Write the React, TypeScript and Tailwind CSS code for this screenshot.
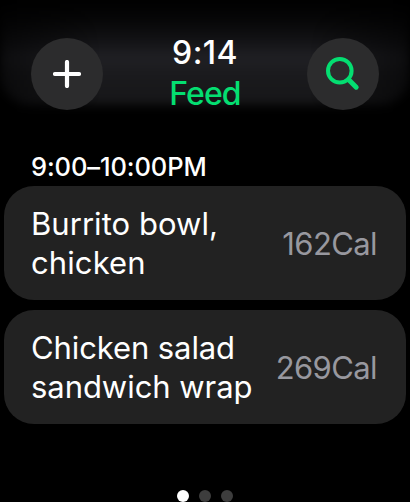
type Entry = {
  name: [string, string];
  tracking: [string, string];
  cal: string;
};

const entries: Entry[] = [
  {
    name: ['Burrito bowl,', 'chicken'],
    tracking: ['tracking-[0.05px]', 'tracking-[0.1px]'],
    cal: '162Cal',
  },
  {
    name: ['Chicken salad', 'sandwich wrap'],
    tracking: ['tracking-[-0.1px]', 'tracking-[-0.05px]'],
    cal: '269Cal',
  },
];

function EntryCard({ entry }: { entry: Entry }) {
  return (
    <li className="flex h-[114px] items-center justify-between rounded-[30px] bg-[#222222] pr-[29px] pl-[27px]">
      <div className="text-[31px] leading-[39px] whitespace-nowrap text-white">
        <div className={entry.tracking[0]}>{entry.name[0]}</div>
        <div className={entry.tracking[1]}>{entry.name[1]}</div>
      </div>
      <span className="text-[31px] leading-[39px] tracking-[-0.6px] text-[#98989f]">{entry.cal}</span>
    </li>
  );
}

export default function App() {
  return (
    <div className="flex h-[502px] w-[410px] flex-col overflow-hidden bg-black font-['Inter',sans-serif]">
      <header className="relative flex h-[118px] shrink-0 justify-between px-[31px] pt-[38px]">
        {/* Soft glow under the status bar */}
        <div className="absolute inset-0 [mask-image:linear-gradient(to_right,rgba(0,0,0,0.4)_0%,#000_25%,#000_75%,rgba(0,0,0,0.4)_100%)]">
          <div className="h-[105px] rounded-b-[30px] bg-[linear-gradient(to_bottom,#000_0px,#060607_20px,#111113_38px,#202024_58px,#1a1a1d_74px,#161618_105px)] blur-[5px]" />
        </div>

        <button aria-label="Add" className="relative flex size-[72px] items-center justify-center rounded-full bg-[#2c2c2d]">
          <svg width="28" height="28" viewBox="0 0 28 28" stroke="#fff" strokeWidth="4.2" strokeLinecap="round">
            <path d="M14 2v24M2 14h24" />
          </svg>
        </button>

        <div className="relative -mt-[6px] flex flex-col items-center text-[32px] leading-[41px] font-medium">
          <span className="tracking-[0.4px] text-white">9:14</span>
          <span className="tracking-[-0.9px] text-[#04de71]">Feed</span>
        </div>

        <button aria-label="Search" className="relative flex size-[72px] items-center justify-center rounded-full bg-[#2c2c2d]">
          <svg width="36" height="36" viewBox="0 0 36 36" fill="none" stroke="#04de71" strokeLinecap="round">
            <circle cx="14.8" cy="14.8" r="11.8" strokeWidth="4" />
            <path d="M23.5 23.5l7.7 7.7" strokeWidth="5" />
          </svg>
        </button>
      </header>

      <main className="px-1 pt-[34px]">
        <h2 className="h-[34px] pl-[27px] text-[25.5px] leading-[30px] font-medium tracking-[-0.1px] text-white">9:00–10:00PM</h2>
        <ul className="flex flex-col gap-2.5">
          {entries.map((entry) => (
            <EntryCard key={entry.cal} entry={entry} />
          ))}
        </ul>
      </main>

      <nav className="mt-auto flex justify-center gap-2.5">
        <span className="size-3 rounded-full bg-white" />
        <span className="size-3 rounded-full bg-[#3d3d3d]" />
        <span className="size-3 rounded-full bg-[#3d3d3d]" />
      </nav>
    </div>
  );
}
